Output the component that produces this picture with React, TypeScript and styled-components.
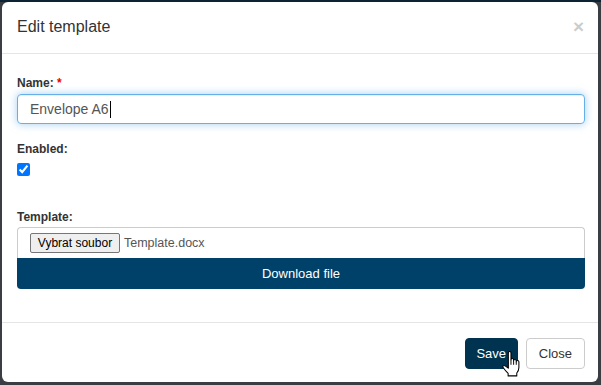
import React from "react";
import styled, { createGlobalStyle } from "styled-components";

const GlobalStyle = createGlobalStyle`
  html, body {
    margin: 0;
    padding: 0;
    background: #3a3d41;
    font-family: "Liberation Sans", Arial, sans-serif;
  }
`;

const HandCursor: React.FC = () => (
  <Cursor width="19" height="26" viewBox="0 0 18 24.5">
    <path
      d="M6 1.6C6 0.8 6.6 0.3 7.25 0.3S8.5 0.8 8.5 1.6V8.2C8.5 7.5 9 7 9.7 7S11 7.5 11 8.2V9.2C11 8.5 11.5 8 12.2 8S13.5 8.5 13.5 9.2V10.2C13.5 9.5 14 9 14.7 9S16 9.5 16 10.2V15.5C16 18 15 19.6 14 20.8V23.5H5.8V21.2C4.6 20 2.2 17.2 1.2 15.8C0.5 14.8 0.9 13.6 2 13.6C3 13.6 4.6 14.9 6 16.2Z"
      fill="#fff"
      stroke="#000"
      strokeWidth="1"
      strokeLinejoin="round"
    />
    <path d="M8.5 8.2V13M11 9.2V13M13.5 10.2V13" stroke="#000" strokeWidth="0.9" fill="none" />
  </Cursor>
);

const App: React.FC = () => {
  return (
    <>
      <GlobalStyle />
      <Backdrop>
        <Modal>
          <Header>
            <Title>Edit template</Title>
            <CloseX>×</CloseX>
          </Header>
          <Body>
            <FormGroup>
              <Label>
                Name: <Required>*</Required>
              </Label>
              <TextInput>
                Envelope A6<Caret />
              </TextInput>
            </FormGroup>
            <FormGroup $spaced>
              <Label>Enabled:</Label>
              <Checkbox type="checkbox" checked readOnly />
            </FormGroup>
            <FormGroup>
              <Label $tight>Template:</Label>
              <FileBox>
                <FileButton>Vybrat soubor</FileButton>
                <FileName>Template.docx</FileName>
              </FileBox>
              <DownloadButton>Download file</DownloadButton>
            </FormGroup>
          </Body>
          <Footer>
            <SaveWrap>
              <Button $primary>Save</Button>
              <HandCursor />
            </SaveWrap>
            <Button>Close</Button>
          </Footer>
        </Modal>
      </Backdrop>
    </>
  );
};

export default App;

// --- Styled Components ---
const Backdrop = styled.div`
  width: 601px;
  height: 385px;
  padding: 2px 3px 3px 2px;
  box-sizing: border-box;
  background: linear-gradient(#0d2232 0, #0d2232 2px, #3a3d41 2px);
`;

const Modal = styled.div`
  width: 596px;
  height: 380px;
  background: #fff;
  border-radius: 6px;
  display: flex;
  flex-direction: column;
  overflow: hidden;
`;

const Header = styled.div`
  display: flex;
  align-items: center;
  justify-content: space-between;
  padding: 14px 14px 16px 15px;
  border-bottom: 1px solid #e5e5e5;
`;

const Title = styled.h4`
  margin: 0;
  font-size: 16px;
  line-height: 21px;
  font-weight: normal;
  color: #333;
`;

const CloseX = styled.span`
  font-size: 19px;
  line-height: 21px;
  font-weight: bold;
  color: #000;
  opacity: 0.2;
`;

const Body = styled.div`
  flex: 1;
  padding: 20px 13px 0 15px;
`;

const FormGroup = styled.div<{ $spaced?: boolean }>`
  margin-bottom: ${(p) => (p.$spaced ? "32px" : "16px")};
`;

const Label = styled.label<{ $tight?: boolean }>`
  display: block;
  font-size: 12px;
  line-height: 18px;
  font-weight: bold;
  color: #333;
  margin-bottom: ${(p) => (p.$tight ? "1px" : "2px")};
`;

const Required = styled.span`
  color: #e00;
`;

const TextInput = styled.div`
  height: 30px;
  box-sizing: border-box;
  border: 1px solid #66afe9;
  border-radius: 4px;
  box-shadow: inset 0 1px 1px rgba(0, 0, 0, 0.075), 0 0 8px rgba(102, 175, 233, 0.6);
  padding: 0 12px;
  display: flex;
  align-items: center;
  font-size: 14px;
  color: #555;
`;

const Caret = styled.span`
  display: inline-block;
  width: 1px;
  height: 17px;
  background: #000;
  margin-left: 1px;
`;

const Checkbox = styled.input`
  display: block;
  width: 13px;
  height: 13px;
  margin: 5px 0 0;
`;

const FileBox = styled.div`
  height: 31px;
  box-sizing: border-box;
  border: 1px solid #ccc;
  border-bottom: none;
  border-radius: 4px 4px 0 0;
  padding: 0 12px;
  display: flex;
  align-items: center;
  gap: 4px;
`;

const FileButton = styled.span`
  height: 20px;
  width: 90px;
  box-sizing: border-box;
  border: 1px solid #767676;
  border-radius: 2px;
  background: #efefef;
  font-size: 12px;
  line-height: 18px;
  text-align: center;
  color: #000;
`;

const FileName = styled.span`
  font-size: 12.5px;
  color: #555;
`;

const DownloadButton = styled.div`
  height: 31px;
  background: #00416a;
  border-radius: 0 0 4px 4px;
  color: #fff;
  font-size: 13px;
  display: flex;
  align-items: center;
  justify-content: center;
`;

const Footer = styled.div`
  border-top: 1px solid #e5e5e5;
  padding: 15px 13px 13px 15px;
  display: flex;
  justify-content: flex-end;
  gap: 8px;
`;

const SaveWrap = styled.div`
  position: relative;
`;

const Button = styled.button<{ $primary?: boolean }>`
  height: 31px;
  padding: 0 ${(p) => (p.$primary ? "10px" : "12px")};
  border-radius: 4px;
  font-family: "Liberation Sans", Arial, sans-serif;
  font-size: 13px;
  border: 1px solid ${(p) => (p.$primary ? "#00334f" : "#ccc")};
  background: ${(p) => (p.$primary ? "#00334f" : "#fff")};
  color: ${(p) => (p.$primary ? "#fff" : "#333")};
  min-width: ${(p) => (p.$primary ? "53px" : "58px")};
`;

const Cursor = styled.svg`
  position: absolute;
  left: 37px;
  top: 13px;
`;
